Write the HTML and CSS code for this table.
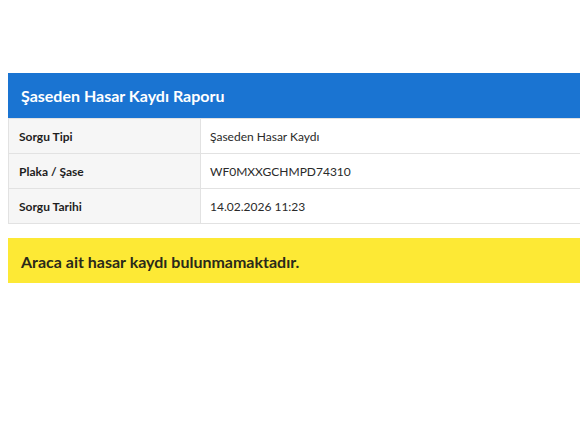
FILE: index.html
```html
<!doctype html>
<html>
<head>
<meta charset="utf-8">
<title>Şaseden Hasar Kaydı Raporu</title>
<link rel="stylesheet" href="styles.css">
</head>
<body>
<div class="report">
    <div class="head">Şaseden Hasar Kaydı Raporu</div>
    <table class="info">
        <tr>
            <th>Sorgu Tipi</th>
            <td>Şaseden Hasar Kaydı</td>
        </tr>
        <tr>
            <th>Plaka / Şase</th>
            <td>WF0MXXGCHMPD74310</td>
        </tr>
        <tr>
            <th>Sorgu Tarihi</th>
            <td>14.02.2026 11:23</td>
        </tr>
    </table>
    <div class="notice">Araca ait hasar kaydı bulunmamaktadır.</div>
</div>
</body>
</html>
```
FILE: styles.css
```css
html,body { padding:0; margin:0; background:#fff; overflow:hidden;}
body { font-family:Lato, "Open Sans", sans-serif; color:#222;}
.report { width:600px; margin-left:8px; padding-top:73px;}
.head { background:#1a74d2; color:#fff; font-size:16px; font-weight:bold; height:45px; line-height:46px; padding-left:13px;}
.info { width:100%; border-collapse:collapse; font-size:12px;}
.info th, .info td { border:1px solid #e2e2e2; height:34px; padding:0 9px; text-align:left;}
.info th { width:172px; background:#f6f6f6; font-weight:bold; font-size:12px; color:#1e1e1e; padding-left:10px;}
.info td { background:#fff; color:#2a2a2a;}
.notice { margin-top:14px; background:#fde935; height:45px; line-height:47px; padding-left:13px; font-size:16px; font-weight:bold; color:#2a2a1a;}
```
